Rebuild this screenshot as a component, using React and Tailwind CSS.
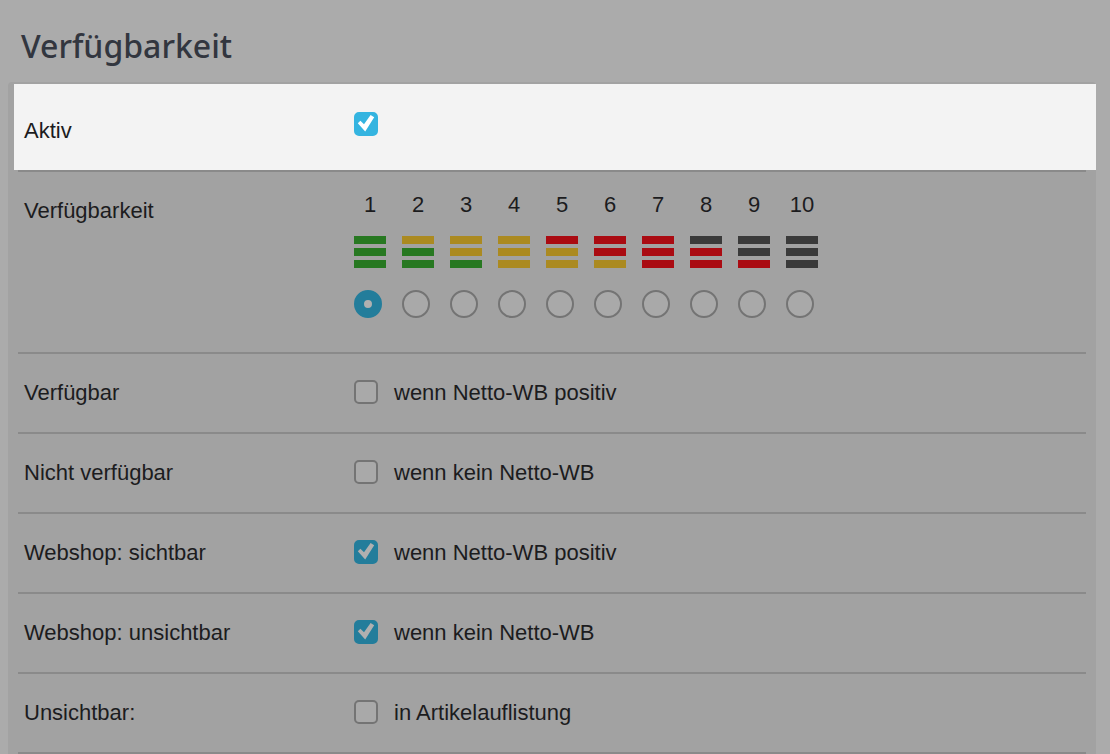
import React from "react";

const BAR = {
  g: "bg-[#277821]",
  y: "bg-[#ab8a21]",
  r: "bg-[#aa0b12]",
  k: "bg-[#3a3a3a]",
};

const LEVELS = ["ggg", "ygg", "yyg", "yyy", "ryy", "rry", "rrr", "krr", "kkr", "kkk"];

const OPTIONS = [
  { id: "available", label: "Verfügbar", text: "wenn Netto-WB positiv", on: false },
  { id: "unavailable", label: "Nicht verfügbar", text: "wenn kein Netto-WB", on: false },
  { id: "shop-visible", label: "Webshop: sichtbar", text: "wenn Netto-WB positiv", on: true },
  { id: "shop-hidden", label: "Webshop: unsichtbar", text: "wenn kein Netto-WB", on: true },
  { id: "hidden", label: "Unsichtbar:", text: "in Artikelauflistung", on: false },
];

function Checkbox({ id, on, bright }) {
  const fill = bright
    ? "checked:border-[#34b4e0] checked:bg-[#34b4e0]"
    : "checked:border-[#237d9b] checked:bg-[#237d9b]";
  return (
    <span className="relative block size-6 shrink-0">
      <input
        id={id}
        type="checkbox"
        defaultChecked={on}
        className={`peer block size-6 appearance-none rounded-[5px] border-2 border-[#747474] bg-[#a9a9a9] ${fill}`}
      />
      <svg
        viewBox="0 0 24 24"
        className={`pointer-events-none absolute inset-0 hidden size-6 peer-checked:block ${bright ? "text-white" : "text-[#b0b0b0]"}`}
        aria-hidden="true"
      >
        <path
          d="M3.8 11.2 L6.4 8.8 L10 12.2 L16.6 3 L20.2 5.2 L11.2 19.6 Z"
          fill="currentColor"
        />
      </svg>
    </span>
  );
}

export default function App() {
  return (
    <main className="bg-[#ababab] pr-3.5 pl-2 font-['Liberation_Sans',Arial,sans-serif] text-[22px] leading-[26px] text-[#1c1c1e]">
      <h1 className="px-[13px] pt-6 pb-[14px] font-['Noto_Sans',sans-serif] text-[32px] leading-[44px] font-medium text-[#32363f]">
        Verfügbarkeit
      </h1>
      <form className="rounded-t-[4px] bg-[#a2a2a2] pt-0.5">
        <div className="ml-1.5 flex bg-[#f3f3f3] pt-7 pb-[26px] pl-2.5">
          <label htmlFor="active" className="w-[330px] shrink-0 pt-1.5">
            Aktiv
          </label>
          <Checkbox id="active" on bright />
        </div>

        <div
          role="radiogroup"
          aria-labelledby="level-label"
          className="mx-2.5 flex border-t-2 border-[#8a8a8a] pt-5 pb-[34px] pl-1.5"
        >
          <span id="level-label" className="w-[330px] shrink-0 pt-1.5">
            Verfügbarkeit
          </span>
          <div className="flex gap-4">
            {LEVELS.map((bars, i) => (
              <label key={bars} className="flex w-8 flex-col">
                <span className="text-center">{i + 1}</span>
                <span className="mt-[18px] flex flex-col gap-1">
                  {bars.split("").map((c, j) => (
                    <span key={j} className={`h-2 ${BAR[c]}`} />
                  ))}
                </span>
                <input
                  type="radio"
                  name="level"
                  defaultChecked={i === 0}
                  className="mt-[22px] size-7 appearance-none rounded-full border-2 border-[#747474] bg-[#a9a9a9] checked:border-10 checked:border-[#237d9b] checked:bg-[#b0b0b0]"
                />
              </label>
            ))}
          </div>
        </div>

        {OPTIONS.map((o) => (
          <div
            key={o.id}
            className="mx-2.5 flex border-t-2 border-[#8a8a8a] py-[26px] pl-1.5 last:border-b-2"
          >
            <label htmlFor={o.id} className="w-[330px] shrink-0">
              {o.label}
            </label>
            <Checkbox id={o.id} on={o.on} />
            <label htmlFor={o.id} className="pl-4">
              {o.text}
            </label>
          </div>
        ))}
      </form>
    </main>
  );
}
